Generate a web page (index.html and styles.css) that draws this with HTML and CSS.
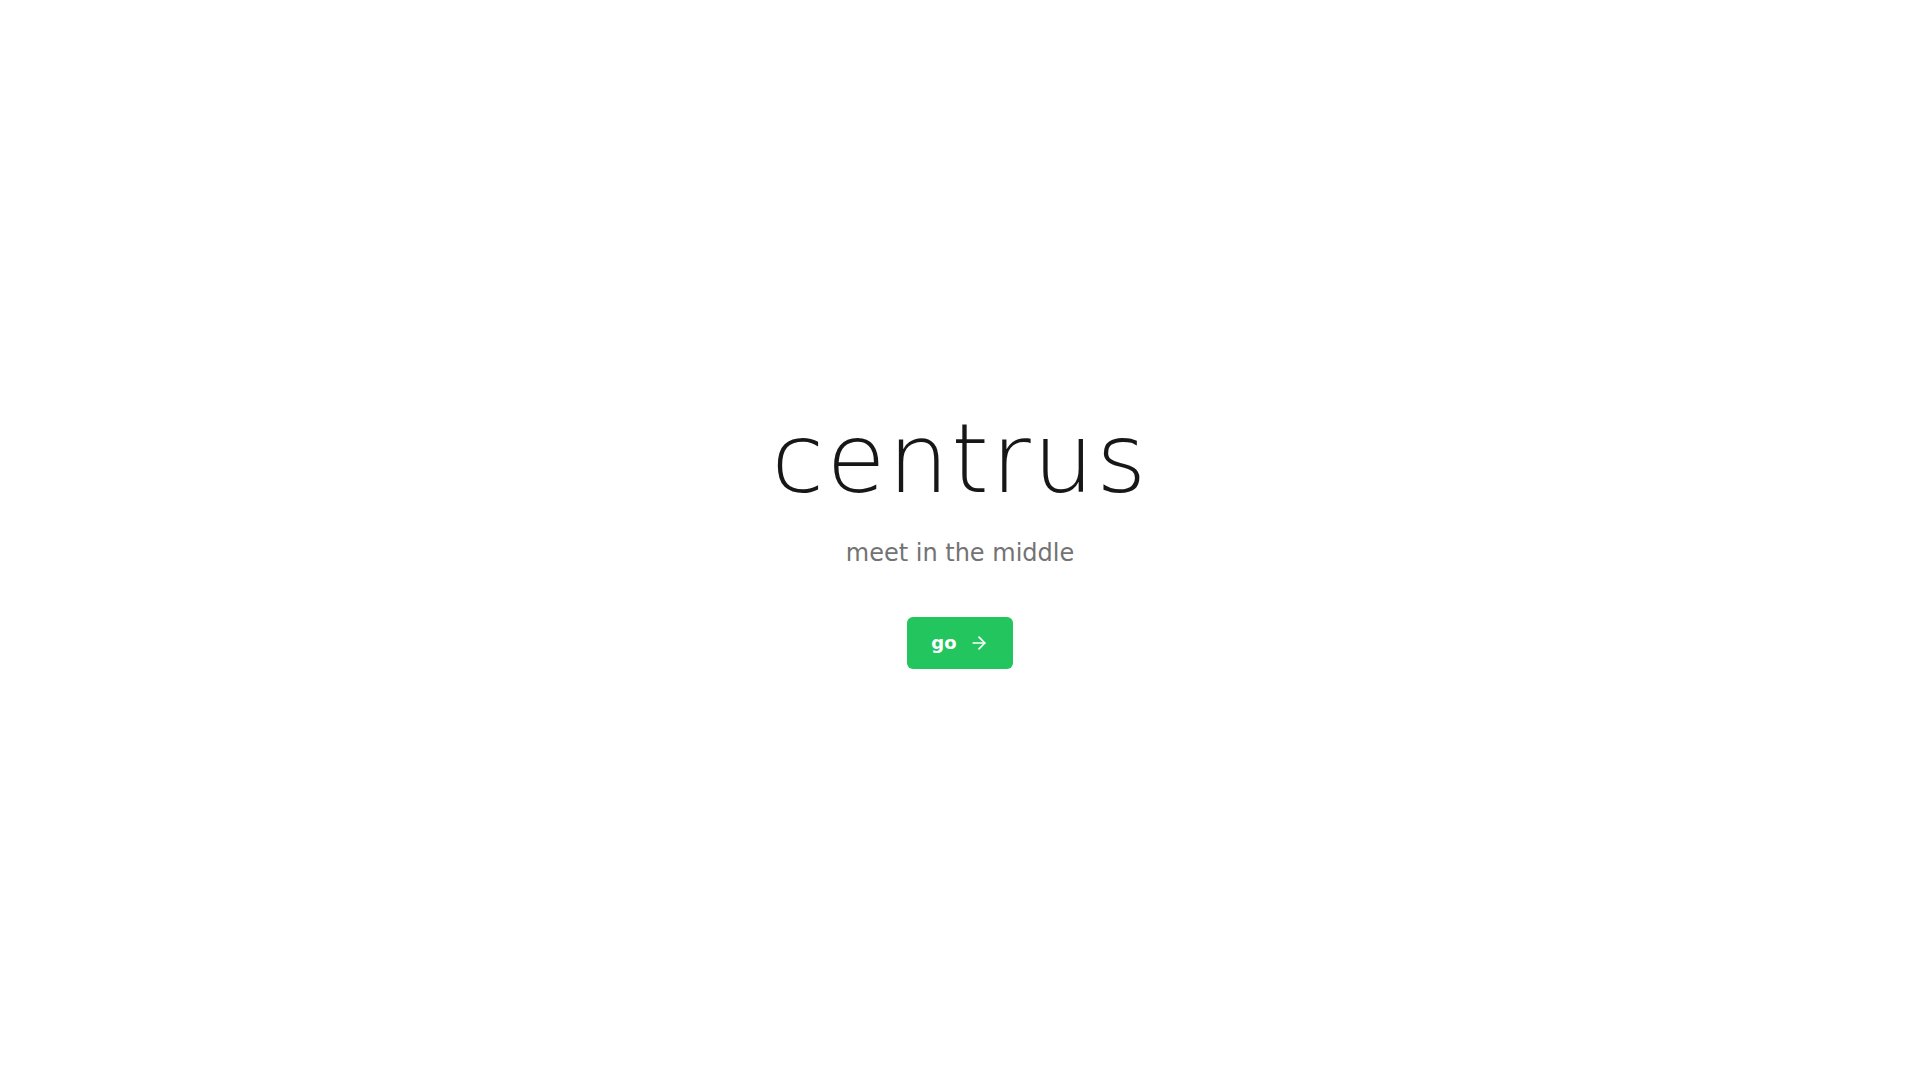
FILE: index.html
```html
<!DOCTYPE html>
<html lang="en">
<head>
<meta charset="utf-8">
<title>centrus</title>
<link rel="stylesheet" href="styles.css">
</head>
<body>
<main class="page">
  <div class="hero">
    <h1 class="title">centrus</h1>
    <p class="tagline">meet in the middle</p>
    <button class="go" type="button">
      <span class="go-label">go</span>
      <svg class="go-icon" viewBox="0 0 24 24" width="20" height="20" fill="none" stroke="currentColor" stroke-width="2" stroke-linecap="round" stroke-linejoin="round" aria-hidden="true"><path d="M5 12h14"/><path d="m12 5 7 7-7 7"/></svg>
    </button>
  </div>
</main>
</body>
</html>
```

FILE: styles.css
```css
html, body {
  margin: 0;
  padding: 0;
  background: #ffffff;
}
body {
  font-family: "DejaVu Sans", sans-serif;
}
.page {
  min-height: 100vh;
  display: flex;
  align-items: center;
  justify-content: center;
}
.hero {
  display: flex;
  flex-direction: column;
  align-items: center;
}
.title {
  margin: 0;
  font-size: 96px;
  line-height: 1;
  font-weight: 200;
  letter-spacing: 0.025em;
  color: #171717;
}
.tagline {
  margin: 30px 0 0;
  font-size: 24px;
  line-height: 32px;
  color: #737373;
}
.go {
  margin-top: 48px;
  display: flex;
  align-items: center;
  gap: 12px;
  padding: 14px 24px;
  border: none;
  border-radius: 6px;
  background: #22c55e;
  color: #ffffff;
  font-family: "DejaVu Sans", sans-serif;
  font-size: 18px;
  font-weight: 700;
  line-height: 24px;
  cursor: pointer;
}
.go-icon {
  display: block;
}
```
